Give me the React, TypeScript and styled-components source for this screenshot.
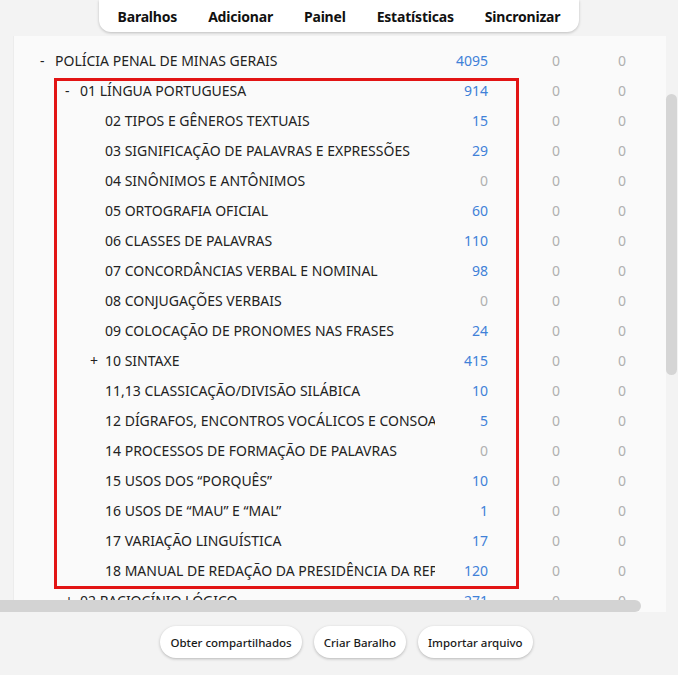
import React, { FunctionComponent } from 'react';
import styled, { createGlobalStyle } from 'styled-components';

const GlobalStyle = createGlobalStyle`
  html, body {
    margin: 0;
    padding: 0;
    background: #f3f3f3;
    font-family: "Noto Sans", "Open Sans", sans-serif;
    color: #1c1c1c;
  }
`;

const Page = styled.div`
  width: 678px;
  height: 675px;
  display: flex;
  flex-direction: column;
  align-items: stretch;
  overflow: hidden;
`;

const NavBar = styled.nav`
  align-self: center;
  display: flex;
  align-items: center;
  gap: 31px;
  height: 32px;
  padding: 0 19px;
  background: #ffffff;
  border-radius: 0 0 12px 12px;
  box-shadow: 0 1px 3px rgba(0, 0, 0, 0.22);
`;

const NavItem = styled.span`
  font-size: 14px;
  font-weight: 700;
  color: #111;
  letter-spacing: -0.2px;
`;

const ScrollArea = styled.div`
  position: relative;
  margin-top: 4px;
  height: 576px;
  overflow: hidden;
`;

const Panel = styled.div`
  margin-left: 13px;
  width: 653px;
  height: 100%;
  background: #fafafa;
  border-left: 1px solid #ececec;
  box-sizing: border-box;
  padding-top: 9px;
`;

const Row = styled.div<{ $level: number }>`
  display: flex;
  align-items: center;
  height: 30px;
  padding-left: ${(p) => 24 + p.$level * 25}px;
  font-size: 14px;
  white-space: nowrap;
  color: #222;
`;

const Toggle = styled.span`
  width: 17px;
  flex: none;
  padding-left: 2px;
  box-sizing: border-box;
`;

const Name = styled.span`
  flex: 1;
  min-width: 0;
  overflow: hidden;
  text-overflow: clip;
`;

const Count = styled.span<{ $w: number; $blue?: boolean }>`
  width: ${(p) => p.$w}px;
  flex: none;
  text-align: right;
  color: ${(p) => (p.$blue ? '#3f81d8' : '#b0b0b0')};
`;

const Spacer = styled.span`
  width: 40px;
  flex: none;
`;

const VThumb = styled.div`
  position: absolute;
  right: 1px;
  top: 58px;
  width: 11px;
  height: 281px;
  border-radius: 6px;
  background: #d5d5d5;
`;

const HThumb = styled.div`
  position: absolute;
  left: 0;
  bottom: 0;
  width: 641px;
  height: 12px;
  border-radius: 0 6px 6px 0;
  background: #d3d3d3;
`;

const Highlight = styled.div`
  position: absolute;
  left: 54px;
  top: 42px;
  width: 465px;
  height: 511px;
  border: 3px solid #e21414;
  box-sizing: border-box;
  pointer-events: none;
`;

const Footer = styled.div`
  display: flex;
  justify-content: center;
  gap: 12px;
  padding-top: 14px;
  padding-left: 15px;
`;

const FooterButton = styled.button`
  height: 32px;
  padding: 0 10px;
  border: none;
  border-radius: 16px;
  background: #ffffff;
  box-shadow: 0 1px 3px rgba(0, 0, 0, 0.25);
  font-family: "Noto Sans", sans-serif;
  font-size: 11.5px;
  font-weight: 500;
  color: #1a1a1a;
`;

type Deck = { level: number; toggle?: string; name: string; due: number };

const decks: Deck[] = [
  { level: 0, toggle: '-', name: 'POLÍCIA PENAL DE MINAS GERAIS', due: 4095 },
  { level: 1, toggle: '-', name: '01 LÍNGUA PORTUGUESA', due: 914 },
  { level: 2, name: '02 TIPOS E GÊNEROS TEXTUAIS', due: 15 },
  { level: 2, name: '03 SIGNIFICAÇÃO DE PALAVRAS E EXPRESSÕES', due: 29 },
  { level: 2, name: '04 SINÔNIMOS E ANTÔNIMOS', due: 0 },
  { level: 2, name: '05 ORTOGRAFIA OFICIAL', due: 60 },
  { level: 2, name: '06 CLASSES DE PALAVRAS', due: 110 },
  { level: 2, name: '07 CONCORDÂNCIAS VERBAL E NOMINAL', due: 98 },
  { level: 2, name: '08 CONJUGAÇÕES VERBAIS', due: 0 },
  { level: 2, name: '09 COLOCAÇÃO DE PRONOMES NAS FRASES', due: 24 },
  { level: 2, toggle: '+', name: '10 SINTAXE', due: 415 },
  { level: 2, name: '11,13 CLASSICAÇÃO/DIVISÃO SILÁBICA', due: 10 },
  { level: 2, name: '12 DÍGRAFOS, ENCONTROS VOCÁLICOS E CONSOANTAIS', due: 5 },
  { level: 2, name: '14 PROCESSOS DE FORMAÇÃO DE PALAVRAS', due: 0 },
  { level: 2, name: '15 USOS DOS “PORQUÊS”', due: 10 },
  { level: 2, name: '16 USOS DE “MAU” E “MAL”', due: 1 },
  { level: 2, name: '17 VARIAÇÃO LINGUÍSTICA', due: 17 },
  { level: 2, name: '18 MANUAL DE REDAÇÃO DA PRESIDÊNCIA DA REPÚBLICA', due: 120 },
  { level: 1, toggle: '+', name: '02 RACIOCÍNIO LÓGICO', due: 271 },
];

const DeckRow: FunctionComponent<{ deck: Deck }> = ({ deck }) => (
  <Row $level={deck.level}>
    <Toggle>{deck.toggle}</Toggle>
    <Name>{deck.name}</Name>
    <Count $w={53} $blue={deck.due > 0}>
      {deck.due}
    </Count>
    <Count $w={72}>0</Count>
    <Count $w={66}>0</Count>
    <Spacer />
  </Row>
);

const App: FunctionComponent = () => (
  <Page>
    <GlobalStyle />
    <NavBar>
      <NavItem>Baralhos</NavItem>
      <NavItem>Adicionar</NavItem>
      <NavItem>Painel</NavItem>
      <NavItem>Estatísticas</NavItem>
      <NavItem>Sincronizar</NavItem>
    </NavBar>
    <ScrollArea>
      <Panel>
        {decks.map((d) => (
          <DeckRow key={d.name} deck={d} />
        ))}
      </Panel>
      <Highlight />
      <VThumb />
      <HThumb />
    </ScrollArea>
    <Footer>
      <FooterButton>Obter compartilhados</FooterButton>
      <FooterButton>Criar Baralho</FooterButton>
      <FooterButton>Importar arquivo</FooterButton>
    </Footer>
  </Page>
);

export default App;
